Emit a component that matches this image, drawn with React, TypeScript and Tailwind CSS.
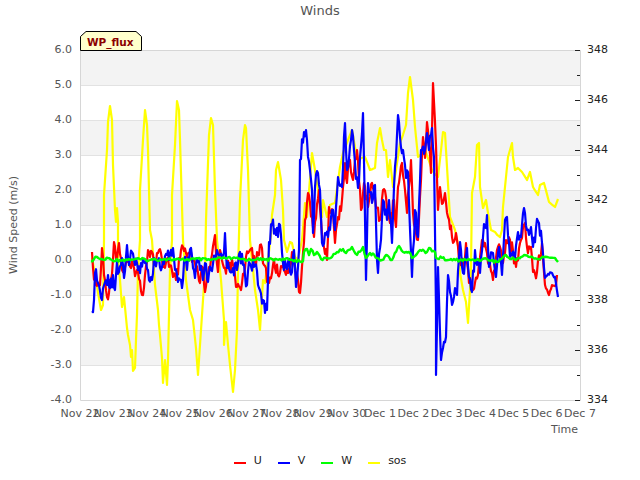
import React from 'react';

// traced series, pixel coordinates of the 640x480 page
const SOS = "92,258 96,280 101,310 103,305 104,240 104,195 107,150 108,122 110,106 112,120 113,165 115,210 116,222 117,208 118,222 118,260 120,280 122,307 124,297 127,328 128,335 130,345 131,357 132,350 133,371 135,368 136,340 137,315 138,270 140,240 140,190 143,140 145,110 147,125 148,150 150,230 152,240 155,285 158,310 159,325 160,335 162,358 163,383 165,360 167,385 168,360 170,270 172,240 172,195 175,145 177,101 179,110 180,140 183,240 186,280 190,310 193,320 196,348 198,375 201,330 203,300 205,270 206,220 209,135 211,118 213,125 215,190 217,240 221,280 224,320 224,345 226,322 228,345 230,365 233,392 235,370 237,330 238,270 240,200 243,140 245,125 246,128 248,170 250,240 255,290 258,310 260,330 263,280 265,283 268,260 271,235 272,215 275,195 276,170 278,162 281,180 283,210 284,240 287,252 290,242 292,243 295,257 298,260 302,240 305,203 307,217 312,153 315,170 318,190 322,217 323,200 327,217 330,205 335,203 340,167 343,153 348,140 352,130 355,147 358,160 365,157 370,170 375,168 377,143 380,128 382,140 384,150 386,150 388,177 390,160 393,187 396,170 400,143 406,125 408,93 410,77 413,100 415,127 418,157 425,150 432,170 438,177 443,132 445,133 447,167 450,217 455,230 459,250 460,273 463,290 466,302 468,323 470,290 471,267 472,193 475,177 477,145 479,143 480,187 483,208 486,200 488,213 491,230 495,232 500,237 502,230 503,207 505,187 508,157 512,143 513,157 515,170 518,168 522,172 527,180 530,172 533,187 538,195 540,185 544,183 549,202 555,207 558,199";

const U = "92,252 93,268 96,285 100,285 102,248 104,275 107,297 111,280 114,242 117,258 119,243 122,270 127,262 131,268 137,270 142,295 145,275 148,250 152,252 154,265 159,250 163,267 168,258 173,277 176,280 180,260 183,247 187,257 191,252 192,262 198,273 200,283 203,268 205,292 210,268 215,235 218,272 220,250 225,268 233,265 237,287 242,283 245,268 248,253 252,248 255,262 260,245 264,265 269,283 273,265 280,273 283,265 288,273 292,252 295,267 299,292 300,293 303,253 305,220 308,193 312,217 314,237 319,190 321,220 323,243 327,260 329,207 333,210 335,243 338,217 342,200 345,163 347,183 350,160 353,180 357,150 361,210 364,183 368,207 372,183 375,197 380,220 383,190 386,197 390,223 394,200 396,227 398,187 402,163 405,190 407,213 411,160 413,213 416,233 418,240 423,137 425,158 427,122 430,153 431,173 433,83 435,122 438,210 440,187 443,203 445,193 448,217 452,237 456,233 459,260 463,267 466,243 469,283 473,290 478,275 482,240 485,243 488,263 493,280 497,250 500,247 503,263 506,240 510,240 516,267 520,243 525,223 527,247 531,247 533,272 537,272 542,243 545,285 549,295 552,285 556,285 557,275";

const V = "92,311 94,300 95,273 98,283 102,300 105,282 108,275 110,288 113,275 115,290 117,262 119,272 122,258 124,278 127,245 129,265 132,252 135,265 138,270 141,263 145,263 148,270 152,280 154,258 157,260 162,267 173,248 175,270 178,282 182,288 184,262 187,270 191,248 193,268 195,278 197,258 200,270 203,280 205,263 208,282 211,270 216,257 220,255 223,258 225,233 227,268 233,268 237,270 240,252 243,265 247,285 249,262 255,265 258,285 263,300 267,310 269,242 272,225 276,235 280,225 284,270 288,262 292,272 294,250 296,287 299,250 300,160 304,132 306,130 307,140 310,170 312,190 313,233 315,187 318,173 320,190 322,243 325,233 328,237 332,210 335,230 338,177 342,187 345,123 347,170 352,130 355,163 358,188 363,113 366,280 368,183 372,203 375,185 377,260 378,273 380,248 383,200 387,220 389,200 392,243 394,187 398,115 400,137 403,150 406,178 408,172 412,277 415,210 418,237 421,150 425,150 427,133 429,150 432,128 434,157 436,310 436,375 438,267 441,360 443,348 446,337 448,275 452,305 455,288 457,295 460,242 463,273 467,248 469,277 472,292 475,250 480,273 483,237 487,215 489,267 493,253 496,277 499,247 502,275 505,220 507,217 510,257 515,258 518,232 521,237 524,208 527,230 531,227 533,247 536,228 539,223 542,243 545,278 548,274 552,273 555,277 558,297";

const W = "91,261 94,259 97,257 100,259 104,260 108,258 112,260 120,260 135,259 150,260 165,259 180,260 195,259 210,260 225,258 240,259 252,260 258,258 262,260 280,259 303,261 304,252 307,249 309,255 311,249 314,255 317,252 321,259 327,258 332,257 337,252 343,249 346,253 352,247 357,255 363,247 366,258 370,253 377,258 382,260 386,255 392,260 399,246 403,252 409,252 412,258 420,250 427,252 429,248 435,252 436,258 442,258 448,260 470,260 487,259 497,262 506,255 510,259 517,259 524,255 530,257 537,259 547,257 555,258 558,262";

const BANDS = [50, 120, 190, 260, 330];
const GRID = [85, 120, 155, 190, 225, 260, 295, 330, 365];
const LEFT = ['6.0', '5.0', '4.0', '3.0', '2.0', '1.0', '0.0', '-1.0', '-2.0', '-3.0', '-4.0'];
const RIGHT = ['348', '346', '344', '342', '340', '338', '336', '334'];
const DAYS = ['Nov 22', 'Nov 23', 'Nov 24', 'Nov 25', 'Nov 26', 'Nov 27', 'Nov 28', 'Nov 29', 'Nov 30', 'Dec 1', 'Dec 2', 'Dec 3', 'Dec 4', 'Dec 5', 'Dec 6', 'Dec 7'];
const LEGEND = [
  { label: 'U', color: 'bg-[#ff0000]' },
  { label: 'V', color: 'bg-[#0000ff]' },
  { label: 'W', color: 'bg-[#00ff00]' },
  { label: 'sos', color: 'bg-[#ffff00]' },
];

// the samples are denser than the trace: fill segments with seeded jitter
function densify(points: string, amp: number, step: number) {
  const pts = points.split(' ').map((p) => p.split(',').map(Number));
  const out: string[] = [];
  let seed = 1;
  pts.forEach(([x, y], i) => {
    out.push(`${x},${y}`);
    const next = pts[i + 1];
    if (!next) return;
    const n = Math.round((next[0] - x) / step);
    for (let k = 1; k < n; k++) {
      const r = Math.sin(seed++ * 12.9898) * 43758.5453;
      const tail = x > 541 ? 0.25 : 1;
      const noise = (r - Math.floor(r) - 0.5) * 2 * amp * tail;
      const t = k / n;
      out.push(`${(x + (next[0] - x) * t).toFixed(1)},${(y + (next[1] - y) * t + noise).toFixed(1)}`);
    }
  });
  return out.join(' ');
}

function Series({ points, color, width = 2 }: { points: string; color: string; width?: number }) {
  return <polyline points={points} fill="none" stroke={color} strokeWidth={width} strokeLinejoin="round" />;
}

function Chart() {
  return (
    <svg className="block" width={640} height={424} viewBox="0 22 640 424" fontSize={11}>
      {BANDS.map((y) => (
        <rect key={y} x={80} y={y} width={500} height={35} fill="#f3f3f3" />
      ))}
      {GRID.map((y) => (
        <line key={y} x1={80} x2={580} y1={y + 0.5} y2={y + 0.5} stroke="#e2e2e2" />
      ))}
      <path d="M80.5 50.5H580.5V400.5H80.5Z" fill="none" stroke="#d6d6d6" />

      {RIGHT.map((_, i) => (
        <line key={i} x1={575} x2={580} y1={50 + i * 50 + 0.5} y2={50 + i * 50 + 0.5} stroke="#222" />
      ))}
      {RIGHT.slice(1).map((_, i) => (
        <line key={i} x1={577} x2={580} y1={75 + i * 50 + 0.5} y2={75 + i * 50 + 0.5} stroke="#222" />
      ))}

      <Series points={densify(SOS, 0.8, 3)} color="#ffff00" width={2.2} />
      <Series points={densify(U, 7, 1)} color="#ff0000" width={2.2} />
      <Series points={densify(V, 8, 1)} color="#0000ff" width={2.2} />
      <Series points={densify(W, 1.5, 1.5)} color="#00ff00" width={2.4} />

      {LEFT.map((t, i) => (
        <text key={t} x={72} y={53 + i * 35} textAnchor="end" fill="#555">{t}</text>
      ))}
      {RIGHT.map((t, i) => (
        <text key={t} x={587} y={53 + i * 50} fill="#222">{t}</text>
      ))}
      {DAYS.map((t, i) => (
        <text key={t} x={80 + (i * 500) / 15} y={417} textAnchor="middle" fill="#555">{t}</text>
      ))}
      <text x={578} y={433} textAnchor="end" fill="#555">Time</text>
      <text x={17} y={225} textAnchor="middle" fill="#555" transform="rotate(-90 17 225)">Wind Speed (m/s)</text>

      {/* station tag */}
      <path d="M80.5 50.5V36.5L86 31.5H136L141.5 36.5V50.5Z" fill="#ffffcc" stroke="#000" />
      <text x={87} y={46} fill="#8b0000" fontWeight="bold" fontSize={10.5}>WP_flux</text>
    </svg>
  );
}

export default function App() {
  return (
    <div className="w-[640px] h-[480px] bg-white font-['DejaVu_Sans',sans-serif] overflow-hidden">
      <div className="h-[22px] text-center text-[13px] leading-[22px] text-[#555]">Winds</div>
      <Chart />
      <div className="flex justify-center items-start gap-[16px] pt-[8px] text-[11px] leading-[13px] text-[#222]">
        {LEGEND.map((item) => (
          <div key={item.label} className="flex items-center gap-[8px]">
            <span className={`block w-[12px] h-[2px] mt-[4px] ${item.color}`} />
            <span>{item.label}</span>
          </div>
        ))}
      </div>
    </div>
  );
}
